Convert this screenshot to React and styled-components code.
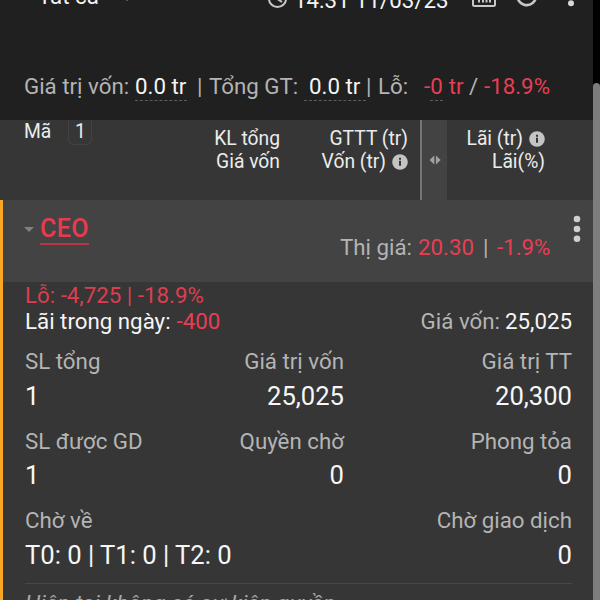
import React from 'react';
import styled, { createGlobalStyle } from 'styled-components';

const GlobalStyle = createGlobalStyle`
  * {
    box-sizing: border-box;
  }

  body {
    margin: 0;
    background: #363636;
    font-family: Roboto, 'Noto Sans', sans-serif;
    overflow: hidden;
  }
`;

const Screen = styled.div`
  display: flex;
  width: 600px;
  height: 600px;
  overflow: hidden;
  background: #363636;
`;

const Content = styled.div`
  width: 593px;
  height: 600px;
  overflow: hidden;
`;

const ScrollTrack = styled.div`
  width: 7px;
  padding-top: 83px;
  background: linear-gradient(#000 120px, #363636 120px);
`;

const ScrollThumb = styled.div`
  height: 517px;
  border-radius: 4px 4px 0 0;
  background: #7d7d7d;
`;

const Text = styled.span`
  display: block;
  padding-bottom: 2px;
  color: ${(p) => p.$color || '#b4b4b4'};
  font-size: 22.3px;
  line-height: 24px;
  white-space: pre;
`;

const TopBar = styled.header`
  height: 120px;
  overflow: hidden;
  background: #202020;
`;

const StatusRow = styled.div`
  display: flex;
  height: 86px;
  margin-top: -12px;
  padding-left: 38px;
`;

const AccountSelect = styled.div`
  display: flex;
  width: 228px;
  margin-top: -4px;

  svg {
    margin: 11px 0 0 22px;
  }
`;

const Clock = styled.div`
  display: flex;
  width: 206px;
  gap: 7px;
`;

const Actions = styled.div`
  display: flex;
  gap: 19px;
`;

const Summary = styled.div`
  display: grid;
  grid-template-columns: 111px 62px 12px 95px 62px 12px 46px 45px 15px auto;
  padding-left: 24px;
`;

const Dashed = styled.div`
  width: ${(p) => p.$width}px;
  height: 27px;
  padding-left: ${(p) => p.$pad || 0}px;
  border-bottom: 1px dashed #5c5c5c;
`;

const LossAmount = styled.div`
  display: flex;
`;

const TableHead = styled.div`
  display: grid;
  grid-template-columns: 150px 130px 128px 12px 27px 98px;
  height: 80px;
  background: #363636;
`;

const HeadText = styled.span`
  display: block;
  color: #ececec;
  font-size: 19.3px;
  line-height: 22px;
  white-space: pre;
`;

const CodeHead = styled.div`
  display: flex;
  gap: 17px;
  padding-left: 24px;

  ${HeadText} {
    padding-top: 1px;
  }
`;

const CountBadge = styled.div`
  width: 24px;
  height: 25px;
  border: 1px solid #424242;
  border-top: 0;
  border-radius: 0 0 6px 6px;
  text-align: center;
`;

const HeadCell = styled.div`
  display: flex;
  flex-direction: column;
  align-items: flex-end;
  gap: 1px;
  padding-top: 8px;
`;

const HeadLine = styled.div`
  display: flex;
  align-items: center;
  gap: 6px;
  height: 22px;
`;

const Resizer = styled.div`
  grid-column: 5;
  display: flex;
  justify-content: center;
  padding-top: 34px;
  border-left: 2px solid #777;
  background: #434343;
`;

const Position = styled.section`
  height: 400px;
  border-left: 3px solid #f9a825;
`;

const PositionHead = styled.div`
  display: flex;
  height: 82px;
  padding-left: 22px;
  background: #434343;
`;

const Ticker = styled.div`
  display: flex;
  width: 315px;
  padding-top: 15px;

  svg {
    margin: 12px 6px 0 -1px;
  }
`;

const TickerName = styled.span`
  height: 30px;
  border-bottom: 2px solid #b93648;
  color: #e83b50;
  font-size: 25px;
  font-weight: 500;
  line-height: 27px;
  letter-spacing: 0.4px;
`;

const MarketPrice = styled.div`
  display: grid;
  grid-template-columns: 78px 65px 14px 76px;
  padding-top: 35px;
`;

const MenuDots = styled.div`
  padding-top: 15px;
`;

const Details = styled.div`
  padding: 0 21px 0 22px;
`;

const DayRow = styled.div`
  display: flex;
  justify-content: space-between;
  height: 40px;
`;

const Inline = styled.div`
  display: flex;
  gap: ${(p) => p.$gap}px;
`;

const LossLine = styled.div`
  padding-top: 1px;
`;

const Stats = styled.div`
  display: grid;
  grid-template-columns: 160px 159px 228px;
  grid-auto-rows: 79.5px;
  height: 234px;
`;

const Stat = styled.div`
  grid-column: ${(p) => p.$column};
  display: flex;
  flex-direction: column;
  align-items: ${(p) => (p.$column === 1 ? 'flex-start' : 'flex-end')};
`;

const StatValue = styled.span`
  margin-top: 5.5px;
  color: #f7f7f7;
  font-size: 25.6px;
  line-height: 30px;
  white-space: nowrap;
`;

const Note = styled.p`
  margin: 0;
  padding-top: 6px;
  border-top: 1px solid #474747;
  color: #a8a8a8;
  font-size: 22.4px;
  font-style: italic;
  line-height: 26px;
  letter-spacing: 0.1px;
  white-space: nowrap;
`;

const InfoIcon = () => (
  <svg width="16" height="16" viewBox="0 0 16 16">
    <circle cx="8" cy="8" r="7.8" fill="#c4c4c4" />
    <path d="M7 6.8h2v5H7zM7 3.8h2v2H7z" fill="#363636" />
  </svg>
);

const RED = '#e83e53';
const WHITE = '#f5f5f5';

const stats = [
  { column: 1, label: 'SL tổng', value: '1' },
  { column: 2, label: 'Giá trị vốn', value: '25,025' },
  { column: 3, label: 'Giá trị TT', value: '20,300' },
  { column: 1, label: 'SL được GD', value: '1' },
  { column: 2, label: 'Quyền chờ', value: '0' },
  { column: 3, label: 'Phong tỏa', value: '0' },
  { column: 1, label: 'Chờ về', value: 'T0: 0 | T1: 0 | T2: 0' },
  { column: 3, label: 'Chờ giao dịch', value: '0' },
];

const App = () => {
  return (
    <>
      <GlobalStyle />
      <Screen>
        <Content>
          <TopBar>
            <StatusRow>
              <AccountSelect>
                <Text $color={WHITE}>Tất cả</Text>
                <svg width="12" height="7" viewBox="0 0 12 7">
                  <path d="M0 0h12L6 6z" fill="#8a8a8a" />
                </svg>
              </AccountSelect>
              <Clock>
                <svg width="21" height="21" viewBox="0 0 21 21">
                  <circle cx="11.5" cy="10.5" r="8.6" fill="none" stroke="#c8c8c8" strokeWidth="2" />
                  <path d="M11.5 5v6l4.5 3" fill="none" stroke="#c8c8c8" strokeWidth="2" />
                </svg>
                <Text $color={WHITE}>14:31 11/03/23</Text>
              </Clock>
              <Actions>
                <svg width="24" height="20" viewBox="0 0 24 20">
                  <rect x="1" y="1.5" width="22" height="16.5" rx="1.5" fill="none" stroke="#c8c8c8" strokeWidth="2" />
                  <path d="M7 6v8.5M11 9v5.5M14.5 7v7.5M18 8v6.5" stroke="#c8c8c8" strokeWidth="2" />
                </svg>
                <svg width="24" height="20" viewBox="0 0 24 20">
                  <path d="M18 1A9.3 9.3 0 1 0 21 7.5" fill="none" stroke="#c8c8c8" strokeWidth="2.6" />
                </svg>
                <svg width="24" height="20" viewBox="0 0 24 20">
                  <circle cx="13" cy="5" r="3" fill="#d8d8d8" />
                  <circle cx="13" cy="15.2" r="3" fill="#d8d8d8" />
                </svg>
              </Actions>
            </StatusRow>

            <Summary>
              <Text>Giá trị vốn:</Text>
              <Dashed $width={52}>
                <Text $color={WHITE}>0.0 tr</Text>
              </Dashed>
              <Text>|</Text>
              <Text>Tổng GT:</Text>
              <Dashed $width={62} $pad={5}>
                <Text $color={WHITE}>0.0 tr</Text>
              </Dashed>
              <Text>|</Text>
              <Text>Lỗ:</Text>
              <LossAmount>
                <Text $color={RED}>-</Text>
                <Dashed $width={13}>
                  <Text $color={RED}>0</Text>
                </Dashed>
                <Text $color={RED}> tr</Text>
              </LossAmount>
              <Text>/</Text>
              <Text $color={RED}>-18.9%</Text>
            </Summary>
          </TopBar>

          <TableHead>
            <CodeHead>
              <HeadText>Mã</HeadText>
              <CountBadge>
                <HeadText>1</HeadText>
              </CountBadge>
            </CodeHead>
            <HeadCell>
              <HeadText>KL tổng</HeadText>
              <HeadText>Giá vốn</HeadText>
            </HeadCell>
            <HeadCell>
              <HeadText>GTTT (tr)</HeadText>
              <HeadLine>
                <HeadText>Vốn (tr)</HeadText>
                <InfoIcon />
              </HeadLine>
            </HeadCell>
            <Resizer>
              <svg width="12" height="12" viewBox="0 0 12 12">
                <path d="M5.3 1.5v9L.5 6zM6.9 1.5v9L11.7 6z" fill="#a0a0a0" />
              </svg>
            </Resizer>
            <HeadCell>
              <HeadLine>
                <HeadText>Lãi (tr)</HeadText>
                <InfoIcon />
              </HeadLine>
              <HeadText>Lãi(%)</HeadText>
            </HeadCell>
          </TableHead>

          <Position>
            <PositionHead>
              <Ticker>
                <svg width="10" height="6" viewBox="0 0 10 6">
                  <path d="M0 0h10L5 5z" fill="#808080" />
                </svg>
                <TickerName>CEO</TickerName>
              </Ticker>
              <MarketPrice>
                <Text>Thị giá:</Text>
                <Text $color={RED}>20.30</Text>
                <Text>|</Text>
                <Text $color={RED}>-1.9%</Text>
              </MarketPrice>
              <MenuDots>
                <svg width="8" height="28" viewBox="0 0 8 28">
                  <circle cx="4" cy="4" r="3.3" fill="#cfcfcf" />
                  <circle cx="4" cy="14" r="3.3" fill="#cfcfcf" />
                  <circle cx="4" cy="23.7" r="3.3" fill="#cfcfcf" />
                </svg>
              </MenuDots>
            </PositionHead>

            <Details>
              <LossLine>
                <Text $color="#dc3e50">Lỗ: -4,725 | -18.9%</Text>
              </LossLine>
              <DayRow>
                <Inline $gap={6}>
                  <Text $color={WHITE}>Lãi trong ngày:</Text>
                  <Text $color={RED}>-400</Text>
                </Inline>
                <Inline $gap={5}>
                  <Text>Giá vốn:</Text>
                  <Text $color={WHITE}>25,025</Text>
                </Inline>
              </DayRow>
              <Stats>
                {stats.map((stat) => (
                  <Stat key={stat.label} $column={stat.column}>
                    <Text>{stat.label}</Text>
                    <StatValue>{stat.value}</StatValue>
                  </Stat>
                ))}
              </Stats>
              <Note>Hiện tại không có sự kiện quyền</Note>
            </Details>
          </Position>
        </Content>
        <ScrollTrack>
          <ScrollThumb />
        </ScrollTrack>
      </Screen>
    </>
  );
};

export default App;
